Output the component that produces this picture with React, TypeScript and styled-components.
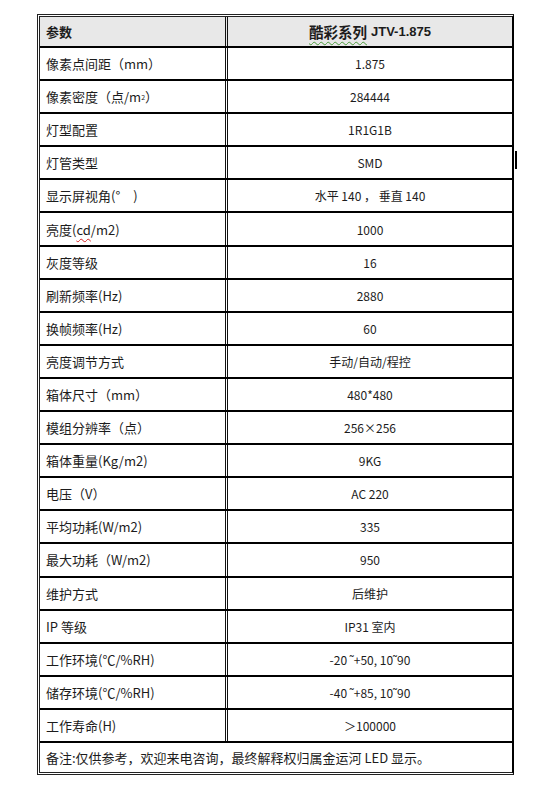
import React from 'react';
import styled, { createGlobalStyle } from 'styled-components';

const GlobalStyle = createGlobalStyle`
  html, body {
    margin: 0;
    padding: 0;
    background: #ffffff;
  }
  body {
    font-family: "Noto Sans CJK SC", "Liberation Sans", sans-serif;
    color: #1c1c1c;
  }
`;

const Page = styled.div`
  padding: 14px 0 0 37px;
  width: 549px;
  height: 799px;
  box-sizing: border-box;
`;

const Frame = styled.div`
  width: 477px;
  box-sizing: border-box;
  border-left: 3px double #222;
  border-top: 3px double #222;
  border-bottom: 3px double #222;
  border-right: 2px solid #000;
`;

const Row = styled.div<{ $head?: boolean; $last?: boolean }>`
  position: relative;
  display: grid;
  grid-template-columns: 188px 1fr;
  height: ${p => (p.$head ? 31 : p.$last ? 29 : 33.1)}px;
  box-sizing: border-box;
  border-bottom: ${p => (p.$last ? 'none' : '2px solid #000')};
  background: ${p => (p.$head ? '#e8e8e8' : '#ffffff')};
`;

const NameCell = styled.div<{ $head?: boolean }>`
  display: flex;
  align-items: center;
  padding-left: 6px;
  border-right: 3px double #111;
  font-size: 13px;
  font-weight: ${p => (p.$head ? 700 : 400)};
  white-space: nowrap;
`;

const ValueCell = styled.div`
  display: flex;
  align-items: center;
  justify-content: center;
  font-size: 12px;
  white-space: nowrap;
`;

const NoteCell = styled.div`
  grid-column: 1 / span 2;
  display: flex;
  align-items: center;
  padding-left: 6px;
  font-size: 13px;
  white-space: nowrap;
`;

const Title = styled.span`
  font-size: 14.5px;
  font-weight: 700;
  text-decoration: underline wavy #4a9a3a;
  text-decoration-thickness: 1px;
  text-underline-offset: 3px;
`;

const Model = styled.span`
  font-family: "Liberation Sans", sans-serif;
  font-size: 13px;
  font-weight: 700;
  margin-left: 4px;
`;

const Squiggle = styled.span`
  text-decoration: underline wavy #d42020;
  text-decoration-thickness: 1px;
  text-underline-offset: 3px;
`;

const Sup = styled.sup`
  font-size: 7px;
  vertical-align: 5px;
  line-height: 0;
`;

const Caret = styled.span`
  position: absolute;
  right: -5px;
  top: 4px;
  width: 2px;
  height: 18px;
  background: #000;
`;

type Spec = { name: React.ReactNode; value: string; caret?: boolean };

const specs: Spec[] = [
  { name: '像素点间距（mm）', value: '1.875' },
  { name: <>像素密度（点/m<Sup>2</Sup>）</>, value: '284444' },
  { name: '灯型配置', value: '1R1G1B' },
  { name: '灯管类型', value: 'SMD', caret: true },
  { name: '显示屏视角(°　)', value: '水平 140 ， 垂直 140' },
  { name: <>亮度(<Squiggle>cd</Squiggle>/m2)</>, value: '1000' },
  { name: '灰度等级', value: '16' },
  { name: '刷新频率(Hz)', value: '2880' },
  { name: '换帧频率(Hz)', value: '60' },
  { name: '亮度调节方式', value: '手动/自动/程控' },
  { name: '箱体尺寸（mm）', value: '480*480' },
  { name: '模组分辨率（点）', value: '256×256' },
  { name: '箱体重量(Kg/m2)', value: '9KG' },
  { name: '电压（V）', value: 'AC 220' },
  { name: '平均功耗(W/m2)', value: '335' },
  { name: '最大功耗（W/m2)', value: '950' },
  { name: '维护方式', value: '后维护' },
  { name: 'IP 等级', value: 'IP31 室内' },
  { name: '工作环境(℃/%RH)', value: '-20 ˜+50, 10˜90' },
  { name: '储存环境(℃/%RH)', value: '-40 ˜+85, 10˜90' },
  { name: '工作寿命(H)', value: '＞100000' },
];

const App: React.FC = () => {
  return (
    <>
      <GlobalStyle />
      <Page>
        <Frame>
          <Row $head>
            <NameCell $head>参数</NameCell>
            <ValueCell>
              <Title>酷彩系列</Title>
              <Model>JTV-1.875</Model>
            </ValueCell>
          </Row>
          {specs.map((spec, i) => (
            <Row key={i}>
              <NameCell>{spec.name}</NameCell>
              <ValueCell>{spec.value}</ValueCell>
              {spec.caret && <Caret />}
            </Row>
          ))}
          <Row $last>
            <NoteCell>备注:仅供参考，欢迎来电咨询，最终解释权归属金运河 LED 显示。</NoteCell>
          </Row>
        </Frame>
      </Page>
    </>
  );
};

export default App;
